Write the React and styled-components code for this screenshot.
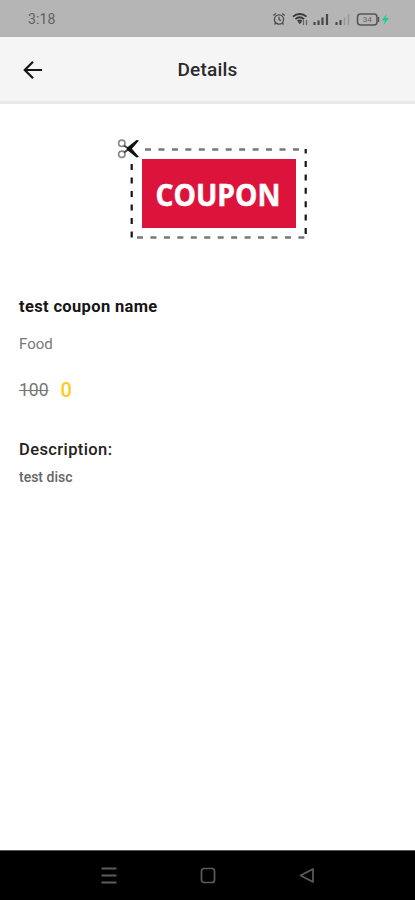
import styled, { createGlobalStyle } from "styled-components";

const App = () => {
  return (
    <Screen>
      <GlobalStyle />
      <StatusBar>
        <Clock>3:18</Clock>
        <StatusIcons />
      </StatusBar>
      <Header>
        <BackButton aria-label="Back">
          <svg width="20" height="20" viewBox="0 0 20 20" fill="none">
            <path
              d="M19 10H2M10 1.800L1.800 10l8.200 8.200"
              stroke="#151515"
              strokeWidth="2.200"
            />
          </svg>
        </BackButton>
        <HeaderTitle>Details</HeaderTitle>
      </Header>
      <Content>
        <CouponImage />
        <CouponName>test coupon name</CouponName>
        <Category>Food</Category>
        <PriceRow>
          <OldPrice>100</OldPrice>
          <NewPrice>0</NewPrice>
        </PriceRow>
        <Subtitle>Description:</Subtitle>
        <Description>test disc</Description>
      </Content>
      <NavBar>
        <svg width="16" height="17" viewBox="0 0 16 17" fill="none">
          <path
            d="M.5 1.500h15M.5 8.500h15M.5 15.500h15"
            stroke="#5c5c5c"
            strokeWidth="2"
          />
        </svg>
        <svg width="16" height="17" viewBox="0 0 16 17" fill="none">
          <rect
            x="1.5"
            y="1.5"
            width="13"
            height="14"
            rx="2.5"
            stroke="#5c5c5c"
            strokeWidth="1.700"
          />
        </svg>
        <svg width="16" height="17" viewBox="0 0 16 17" fill="none">
          <path
            d="M14 2v13L1.5 8.5z"
            stroke="#5c5c5c"
            strokeWidth="1.700"
            strokeLinejoin="round"
          />
        </svg>
      </NavBar>
    </Screen>
  );
};

const StatusIcons = () => (
  <svg width="120" height="16" viewBox="0 0 120 16" fill="none">
    {/* alarm */}
    <g stroke="#4c4c4c" strokeWidth="1.3">
      <circle cx="7" cy="8.5" r="4.6" />
      <path d="M7 5.7v3l2 1M1.3 4.4l2.5-2M12.7 4.4l-2.5-2M3.8 12l-1.3 1.5M10.2 12l1.3 1.5" />
    </g>
    {/* wifi */}
    <g stroke="#383838" strokeWidth="1.8">
      <path d="M21 5.6c4-3.5 9.5-3.5 13.5 0" />
      <path d="M23.4 8.1c2.7-2.3 6-2.3 8.7 0" />
      <path d="M25.7 10.3c1.3-1 2.7-1 4 0" />
    </g>
    <path d="M25.800 10.800h4l-2 2.500z" fill="#383838" />
    <path d="M31.500 9v5M34.500 9v5" stroke="#666" strokeWidth="1.3" />
    {/* signal */}
    <path
      d="M42.500 11v3M46.500 9.500V14M50.500 6.500V14M55 3v11"
      stroke="#484848"
      strokeWidth="2.200"
    />
    <path d="M64.500 11v3M68.500 9V14" stroke="#444" strokeWidth="2" />
    <path d="M72.500 6.500V14M76.500 3v11" stroke="#999" strokeWidth="1.600" />
    {/* battery */}
    <rect
      x="85.5"
      y="3"
      width="19.5"
      height="11"
      rx="3"
      stroke="#555"
      strokeWidth="1.5"
    />
    <path d="M106.500 6v5" stroke="#555" strokeWidth="1.5" />
    <text
      x="95.2"
      y="11.400"
      textAnchor="middle"
      fontFamily="Roboto, sans-serif"
      fontSize="8"
      fill="#666"
    >
      34
    </text>
    <path d="M114.5 3l-5 6.500h3.500l-1.500 4.500 5.500-7h-3.500z" fill="#18d08b" />
  </svg>
);

const CouponImage = () => (
  <CouponSvg viewBox="0 0 194 106" fill="none">
    <g stroke="#777" strokeWidth="2.400">
      <path d="M28 15.500h157" strokeDasharray="6 7.450" />
      <path d="M20 103.500h168" strokeDasharray="6 7.450" />
    </g>
    <g stroke="#151515" strokeWidth="2.2">
      <path d="M14.700 30v75" strokeDasharray="6 7.500" />
      <path d="M188.700 15v4.500" />
      <path d="M188.700 27v74" strokeDasharray="6 7.400" />
    </g>
    <rect x="25" y="25" width="154" height="69" fill="#dc143c" />
    <text
      x="38.500"
      y="71.5"
      textLength="125"
      lengthAdjust="spacingAndGlyphs"
      fontFamily="'Open Sans', sans-serif"
      fontWeight="700"
      fontSize="29.5"
      fill="#fff"
      stroke="#fff"
      strokeWidth="0.5"
    >
      COUPON
    </text>
    {/* scissors */}
    <g stroke="#888" strokeWidth="1.6">
      <circle cx="4.800" cy="9.300" r="3.200" />
      <circle cx="4.800" cy="20.300" r="3.200" />
    </g>
    <path d="M7 11.500l5 3.500M7 18.500l5-3.500" stroke="#444" strokeWidth="2" />
    <path d="M9.500 14L19.500 6l2.500.5-9 10.500z" fill="#111" />
    <path d="M9.500 15.500l10 8 2.500-.5-9-10.500z" fill="#111" />
  </CouponSvg>
);

export default App;

const GlobalStyle = createGlobalStyle`
  * {
    box-sizing: border-box;
  }
  body {
    margin: 0;
    background: #fff;
    font-family: Roboto, "Liberation Sans", sans-serif;
  }
`;

const Screen = styled.div`
  display: flex;
  flex-direction: column;
  width: 100%;
  height: 900px;
  background: #fff;
`;

const StatusBar = styled.div`
  display: flex;
  flex-shrink: 0;
  align-items: center;
  justify-content: space-between;
  height: 37px;
  padding: 1px 23px 0 28px;
  background: #b5b5b5;
`;

const Clock = styled.span`
  font-size: 14px;
  letter-spacing: 0.1px;
  color: #606060;
`;

const Header = styled.header`
  display: grid;
  grid-template-columns: 43px 1fr 43px;
  flex-shrink: 0;
  align-items: center;
  height: 67px;
  padding: 2px 0 0;
  background: #f5f5f5;
  border-bottom: 3px solid #e9e9e9;
`;

const BackButton = styled.button`
  display: flex;
  margin: 0 0 0 23px;
  padding: 0;
  border: none;
  background: none;
`;

const HeaderTitle = styled.h1`
  margin: 0;
  font-size: 19px;
  font-weight: 500;
  line-height: 24px;
  letter-spacing: 0.2px;
  text-align: center;
  color: #2a2a2a;
`;

const Content = styled.main`
  display: flex;
  flex-direction: column;
  flex: 1;
  padding: 30px 19px 0;
`;

const CouponSvg = styled.svg`
  width: 194px;
  height: 106px;
  margin: 0 0 57px 98px;
`;

const CouponName = styled.h2`
  margin: 0;
  font-size: 16.5px;
  font-weight: 700;
  line-height: 20px;
  letter-spacing: 0.35px;
  color: #161616;
`;

const Category = styled.p`
  margin: 17px 0 0;
  font-size: 15px;
  line-height: 20px;
  color: #777;
`;

const PriceRow = styled.div`
  display: flex;
  align-items: center;
  gap: 12px;
  height: 24px;
  margin: 24px 0 0;
`;

const OldPrice = styled.span`
  font-size: 17.5px;
  text-decoration: line-through;
  color: #777;
`;

const NewPrice = styled.span`
  font-size: 20px;
  font-weight: 500;
  color: #fccb18;
`;

const Subtitle = styled.h3`
  margin: 38px 0 0;
  font-size: 16.5px;
  font-weight: 500;
  line-height: 20px;
  letter-spacing: 0.4px;
  color: #222;
`;

const Description = styled.p`
  margin: 8px 0 0;
  font-size: 14px;
  font-weight: 500;
  line-height: 18px;
  color: #666;
`;

const NavBar = styled.nav`
  display: flex;
  flex-shrink: 0;
  align-items: center;
  justify-content: space-between;
  height: 50px;
  padding: 0 100px 0 101px;
  background: #000;
  border-top: 1px solid #555;
`;
